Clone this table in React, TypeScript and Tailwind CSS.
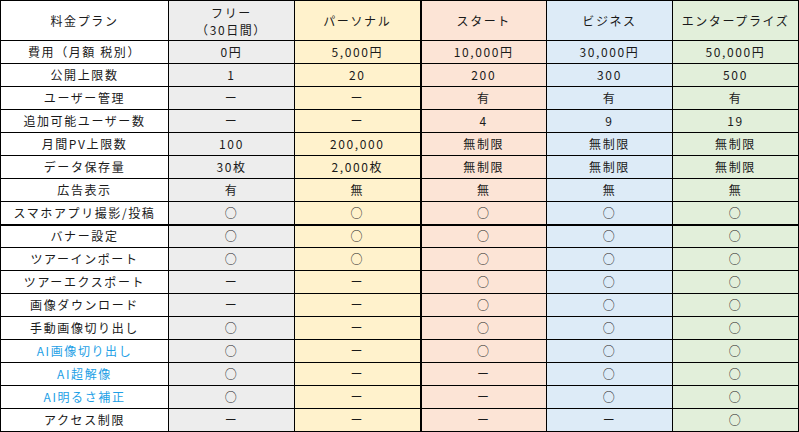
import React from "react";

const bgs = ["bg-[#ededed]", "bg-[#fff2cc]", "bg-[#fce4d6]", "bg-[#ddebf7]", "bg-[#e2efda]"];

type Row = { label: string; blue?: boolean; thick?: boolean; vals: string[] };

const O = "○";
const D = "ー";

const rows: Row[] = [
  { label: "費用（月額 税別）", vals: ["0円", "5,000円", "10,000円", "30,000円", "50,000円"] },
  { label: "公開上限数", vals: ["1", "20", "200", "300", "500"] },
  { label: "ユーザー管理", vals: [D, D, "有", "有", "有"] },
  { label: "追加可能ユーザー数", vals: [D, D, "4", "9", "19"] },
  { label: "月間PV上限数", vals: ["100", "200,000", "無制限", "無制限", "無制限"] },
  { label: "データ保存量", vals: ["30枚", "2,000枚", "無制限", "無制限", "無制限"] },
  { label: "広告表示", vals: ["有", "無", "無", "無", "無"] },
  { label: "スマホアプリ撮影/投稿", thick: true, vals: [O, O, O, O, O] },
  { label: "バナー設定", vals: [O, O, O, O, O] },
  { label: "ツアーインポート", vals: [O, O, O, O, O] },
  { label: "ツアーエクスポート", vals: [D, D, O, O, O] },
  { label: "画像ダウンロード", vals: [D, D, O, O, O] },
  { label: "手動画像切り出し", vals: [O, D, O, O, O] },
  { label: "AI画像切り出し", blue: true, vals: [O, D, O, O, O] },
  { label: "AI超解像", blue: true, vals: [O, D, D, O, O] },
  { label: "AI明るさ補正", blue: true, vals: [O, D, D, O, O] },
  { label: "アクセス制限", vals: [D, D, D, D, O] },
];

const headers = ["パーソナル", "スタート", "ビジネス", "エンタープライズ"];

export default function App() {
  return (
    <div className="w-[799px] h-[432px] bg-white font-['Noto_Sans_CJK_JP','Noto_Sans',sans-serif] text-[12px] text-[#1a1a1a] tracking-[1.6px]">
      <table className="table-fixed border-collapse w-[798px]">
        <colgroup>
          <col className="w-[168px]" />
          <col className="w-[126px]" />
          <col className="w-[126px]" />
          <col className="w-[126px]" />
          <col className="w-[126px]" />
          <col className="w-[126px]" />
        </colgroup>
        <thead>
          <tr className="h-[40px]">
            <th className="border border-black font-normal text-center p-0 leading-[15px] bg-white">料金プラン</th>
            <th className={`border border-black font-normal text-center p-0 leading-[17px] ${bgs[0]}`}>
              <div>フリー</div>
              <div>（30日間）</div>
            </th>
            {headers.map((h, i) => (
              <th
                key={h}
                className={`border border-black font-normal text-center p-0 leading-[15px] ${bgs[i + 1]} ${i === 0 ? "border-r-2" : ""} ${i === 1 ? "border-l-2" : ""}`}
              >
                {h}
              </th>
            ))}
          </tr>
        </thead>
        <tbody>
          {rows.map((r) => (
            <tr key={r.label} className="h-[23px]">
              <td
                className={`border border-black text-center p-0 leading-[14px] bg-white ${r.blue ? "text-[#1e9fe6]" : ""} ${r.thick ? "border-b-2" : ""}`}
              >
                {r.label}
              </td>
              {r.vals.map((v, i) => (
                <td
                  key={i}
                  className={`border border-black text-center p-0 leading-[14px] ${bgs[i]} ${i === 1 ? "border-r-2" : ""} ${i === 2 ? "border-l-2" : ""} ${r.thick ? "border-b-2" : ""}`}
                >
                  {v}
                </td>
              ))}
            </tr>
          ))}
        </tbody>
      </table>
    </div>
  );
}
